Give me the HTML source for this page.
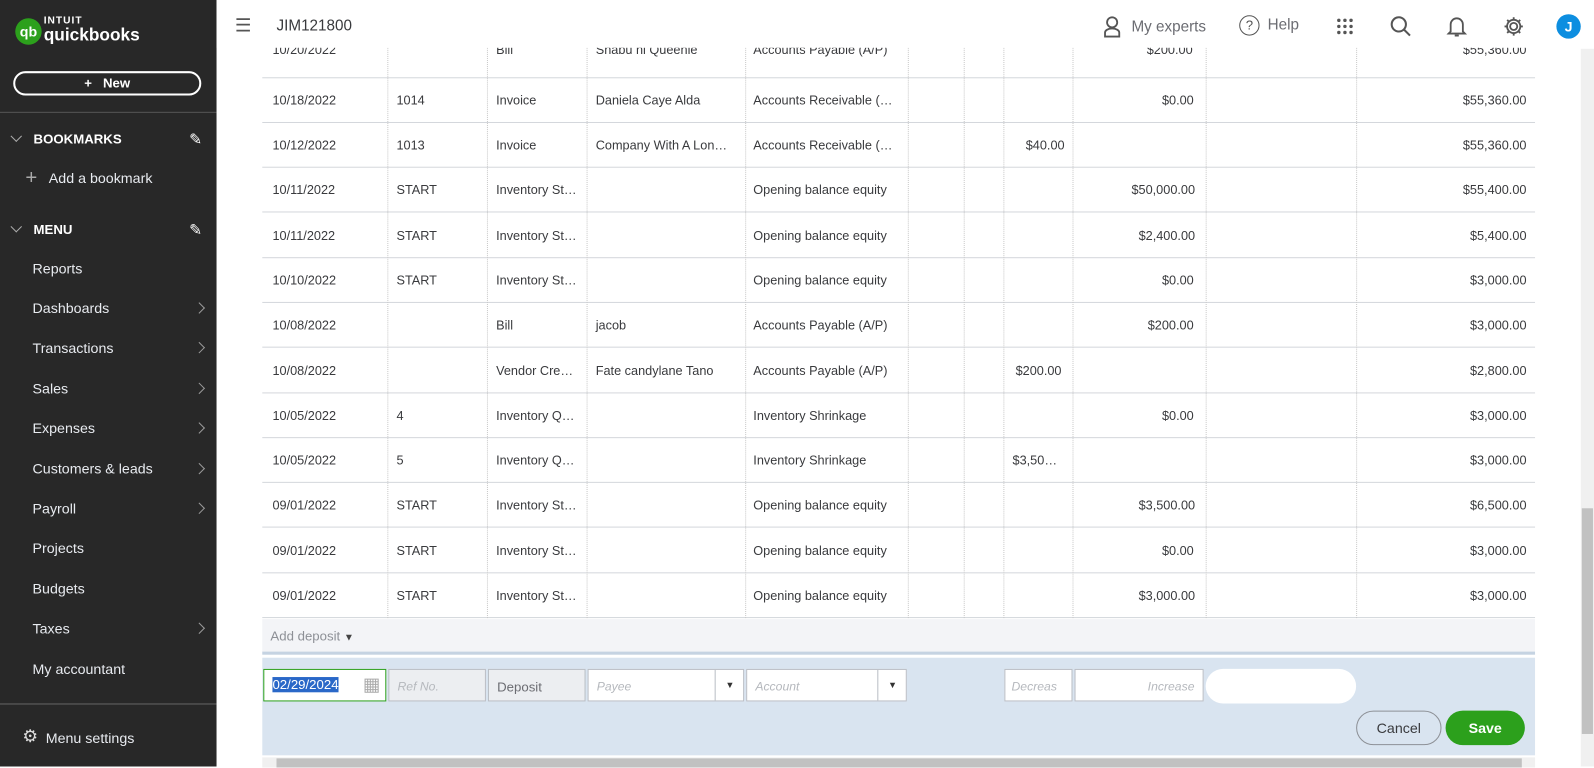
<!DOCTYPE html>
<html><head><meta charset="utf-8"><style>
*{box-sizing:border-box;margin:0;padding:0}
html,body{width:1594px;height:766px;overflow:hidden;background:#fff}
#w{position:absolute;left:0;top:0;width:1568px;height:754px;transform:scale(1.01658);transform-origin:0 0;font-family:"Liberation Sans",sans-serif;color:#393a3d}
.sb{position:absolute;left:0;top:0;width:213px;height:754px;background:#282828;color:#fff}
.sb .it{position:absolute;left:32px;font-size:14px;color:#e8ebf0}
.chev{position:absolute;left:192px;width:8px;height:8px;border-right:1.6px solid #9a9a9a;border-top:1.6px solid #9a9a9a;transform:rotate(45deg)}
.row{position:absolute;left:258px;width:1252px;height:44px;border-bottom:1px solid #d4d7dc;font-size:12.5px}
.row span{position:absolute;top:15px;white-space:nowrap}
.vl{position:absolute;top:33px;height:575px;border-left:1px dotted #c8c8c8}
.inp{position:absolute;top:658px;height:32px;background:#fff;border:1px solid #babec5;font-size:12px;font-style:italic;color:#b5b8bd;padding:9px 8px}
</style></head><body><div id="w">
<div class="sb">
 <svg style="position:absolute;left:13px;top:16px" width="30" height="30"><circle cx="15" cy="15" r="13" fill="#2ca01c"/><text x="15" y="20" font-size="14" font-weight="bold" fill="#fff" text-anchor="middle" font-family="Liberation Sans">qb</text></svg>
 <div style="position:absolute;left:43px;top:15px;font-size:10px;font-weight:bold;letter-spacing:1px">INTUIT</div>
 <div style="position:absolute;left:43px;top:25px;font-size:17px;font-weight:bold">quickbooks</div>
 <div style="position:absolute;left:13px;top:70px;width:185px;height:24px;border:2px solid #fff;border-radius:12px;text-align:center;font-size:13px;font-weight:bold;line-height:20px">+&nbsp;&nbsp; New</div>
 <div style="position:absolute;left:0;top:110px;width:213px;border-top:1px solid #555"></div>
 <div style="position:absolute;left:12px;top:130px;width:8px;height:8px;border-right:1.6px solid #aaa;border-bottom:1.6px solid #aaa;transform:rotate(45deg)"></div>
 <div style="position:absolute;left:33px;top:129px;font-size:13px;font-weight:bold">BOOKMARKS</div>
 <div style="position:absolute;left:186px;top:128px;font-size:15px">✎</div>
 <div style="position:absolute;left:25px;top:164px;font-size:20px;color:#aaa">+</div>
 <div class="it" style="left:48px;top:167px">Add a bookmark</div>
 <div style="position:absolute;left:12px;top:219px;width:8px;height:8px;border-right:1.6px solid #aaa;border-bottom:1.6px solid #aaa;transform:rotate(45deg)"></div>
 <div style="position:absolute;left:33px;top:218px;font-size:13px;font-weight:bold">MENU</div>
 <div style="position:absolute;left:186px;top:217px;font-size:15px">✎</div>
 <div class="it" style="top:256px">Reports</div>
 <div class="it" style="top:295px">Dashboards</div><div class="chev" style="top:299px"></div>
 <div class="it" style="top:334px">Transactions</div><div class="chev" style="top:338px"></div>
 <div class="it" style="top:374px">Sales</div><div class="chev" style="top:378px"></div>
 <div class="it" style="top:413px">Expenses</div><div class="chev" style="top:417px"></div>
 <div class="it" style="top:453px">Customers &amp; leads</div><div class="chev" style="top:457px"></div>
 <div class="it" style="top:492px">Payroll</div><div class="chev" style="top:496px"></div>
 <div class="it" style="top:531px">Projects</div>
 <div class="it" style="top:571px">Budgets</div>
 <div class="it" style="top:610px">Taxes</div><div class="chev" style="top:614px"></div>
 <div class="it" style="top:650px">My accountant</div>
 <div style="position:absolute;left:0;top:692px;width:213px;border-top:1px solid #666"></div>
 <div style="position:absolute;left:22px;top:715px;font-size:17px;color:#ddd">⚙</div>
 <div class="it" style="left:45px;top:718px">Menu settings</div>
</div>

<div class="row" style="top:33px"><span style="left:10px;top:9px">10/20/2022</span><span style="left:230px;top:9px">Bill</span><span style="left:328px;top:9px">Shabu ni Queenie</span><span style="left:483px;top:9px">Accounts Payable (A/P)</span><span style="left:870px;top:9px">$200.00</span><span style="left:1181px;top:9px">$55,360.00</span></div>
<div class="row" style="top:77px"><span style="left:10px">10/18/2022</span><span style="left:132px">1014</span><span style="left:230px">Invoice</span><span style="left:328px">Daniela Caye Alda</span><span style="left:483px">Accounts Receivable (…</span><span style="left:885px">$0.00</span><span style="left:1181px">$55,360.00</span></div>
<div class="row" style="top:121px"><span style="left:10px">10/12/2022</span><span style="left:132px">1013</span><span style="left:230px">Invoice</span><span style="left:328px">Company With A Lon…</span><span style="left:483px">Accounts Receivable (…</span><span style="left:751px">$40.00</span><span style="left:1181px">$55,360.00</span></div>
<div class="row" style="top:165px"><span style="left:10px">10/11/2022</span><span style="left:132px">START</span><span style="left:230px">Inventory St…</span><span style="left:483px">Opening balance equity</span><span style="left:855px">$50,000.00</span><span style="left:1181px">$55,400.00</span></div>
<div class="row" style="top:210px"><span style="left:10px">10/11/2022</span><span style="left:132px">START</span><span style="left:230px">Inventory St…</span><span style="left:483px">Opening balance equity</span><span style="left:862px">$2,400.00</span><span style="left:1188px">$5,400.00</span></div>
<div class="row" style="top:254px"><span style="left:10px">10/10/2022</span><span style="left:132px">START</span><span style="left:230px">Inventory St…</span><span style="left:483px">Opening balance equity</span><span style="left:885px">$0.00</span><span style="left:1188px">$3,000.00</span></div>
<div class="row" style="top:298px"><span style="left:10px">10/08/2022</span><span style="left:230px">Bill</span><span style="left:328px">jacob</span><span style="left:483px">Accounts Payable (A/P)</span><span style="left:871px">$200.00</span><span style="left:1188px">$3,000.00</span></div>
<div class="row" style="top:343px"><span style="left:10px">10/08/2022</span><span style="left:230px">Vendor Cre…</span><span style="left:328px">Fate candylane Tano</span><span style="left:483px">Accounts Payable (A/P)</span><span style="left:741px">$200.00</span><span style="left:1188px">$2,800.00</span></div>
<div class="row" style="top:387px"><span style="left:10px">10/05/2022</span><span style="left:132px">4</span><span style="left:230px">Inventory Q…</span><span style="left:483px">Inventory Shrinkage</span><span style="left:885px">$0.00</span><span style="left:1188px">$3,000.00</span></div>
<div class="row" style="top:431px"><span style="left:10px">10/05/2022</span><span style="left:132px">5</span><span style="left:230px">Inventory Q…</span><span style="left:483px">Inventory Shrinkage</span><span style="left:738px">$3,50…</span><span style="left:1188px">$3,000.00</span></div>
<div class="row" style="top:475px"><span style="left:10px">09/01/2022</span><span style="left:132px">START</span><span style="left:230px">Inventory St…</span><span style="left:483px">Opening balance equity</span><span style="left:862px">$3,500.00</span><span style="left:1188px">$6,500.00</span></div>
<div class="row" style="top:520px"><span style="left:10px">09/01/2022</span><span style="left:132px">START</span><span style="left:230px">Inventory St…</span><span style="left:483px">Opening balance equity</span><span style="left:885px">$0.00</span><span style="left:1188px">$3,000.00</span></div>
<div class="row" style="top:564px"><span style="left:10px">09/01/2022</span><span style="left:132px">START</span><span style="left:230px">Inventory St…</span><span style="left:483px">Opening balance equity</span><span style="left:862px">$3,000.00</span><span style="left:1188px">$3,000.00</span></div>
<div class="vl" style="left:381px"></div><div class="vl" style="left:479px"></div><div class="vl" style="left:577px"></div><div class="vl" style="left:733px"></div><div class="vl" style="left:893px"></div><div class="vl" style="left:948px"></div><div class="vl" style="left:987px"></div><div class="vl" style="left:1055px"></div><div class="vl" style="left:1186px"></div><div class="vl" style="left:1334px"></div>

<div style="position:absolute;left:213px;top:0;width:1355px;height:47px;background:#fff"></div>
<div style="position:absolute;left:231px;top:15px;font-size:18px;color:#555">☰</div>
<div style="position:absolute;left:272px;top:17px;font-size:15px;color:#393a3d">JIM121800</div>
<svg style="position:absolute;left:1085px;top:15px" width="18" height="22" fill="none" stroke="#555" stroke-width="1.8"><circle cx="9" cy="7" r="5"/><path d="M2 21v-4a7 4 0 0114 0v4z"/></svg>
<div style="position:absolute;left:1113px;top:18px;font-size:15px;color:#6b6c72">My experts</div>
<div style="position:absolute;left:1219px;top:15px;width:20px;height:20px;border:1.8px solid #555;border-radius:50%;font-size:13px;text-align:center;line-height:17px;color:#555">?</div>
<div style="position:absolute;left:1247px;top:16px;font-size:15px;color:#6b6c72">Help</div>
<svg style="position:absolute;left:1315px;top:18px" width="16" height="16" fill="#555"><circle cx="2" cy="2" r="1.7"/><circle cx="8" cy="2" r="1.7"/><circle cx="14" cy="2" r="1.7"/><circle cx="2" cy="8" r="1.7"/><circle cx="8" cy="8" r="1.7"/><circle cx="14" cy="8" r="1.7"/><circle cx="2" cy="14" r="1.7"/><circle cx="8" cy="14" r="1.7"/><circle cx="14" cy="14" r="1.7"/></svg>
<svg style="position:absolute;left:1367px;top:15px" width="22" height="22" fill="none" stroke="#555" stroke-width="2"><circle cx="9" cy="9" r="7"/><path d="M14 14l6 6"/></svg>
<svg style="position:absolute;left:1423px;top:14px" width="20" height="24" fill="none" stroke="#555" stroke-width="1.8"><path d="M4 17V10a6 6 0 0112 0v7l2 2H2z M8 21h4"/></svg>
<svg style="position:absolute;left:1478px;top:15px" width="22" height="22" fill="none" stroke="#555" stroke-width="1.8"><circle cx="11" cy="11" r="3.5"/><path d="M11 2v3M11 17v3M2 11h3M17 11h3M4.6 4.6l2.1 2.1M15.3 15.3l2.1 2.1M4.6 17.4l2.1-2.1M15.3 6.7l2.1-2.1"/><circle cx="11" cy="11" r="6.5"/></svg>
<div style="position:absolute;left:1531px;top:14px;width:24px;height:24px;border-radius:50%;background:#0d8ee0;color:#fff;font-weight:bold;font-size:14px;text-align:center;line-height:24px">J</div>

<div style="position:absolute;left:258px;top:609px;width:1252px;height:35px;background:#f3f4f7;border-bottom:3px solid #c5d3e2;font-size:13px;color:#8d9096;padding:9px 8px">Add deposit <span style="font-size:10px;color:#444">▼</span></div>
<div style="position:absolute;left:258px;top:647px;width:1252px;height:96px;background:#d9e4f0"></div>
<div class="inp" style="left:259px;width:121px;border:1.5px solid #2ca01c;font-style:normal;color:#fff;padding:7px 8px"><span style="background:#2a68c8;font-size:13px">02/29/2024</span><span style="position:absolute;right:5px;top:4px;font-size:18px;color:#aaa">▦</span></div>
<div class="inp" style="left:382px;width:96px;background:#eceef1">Ref No.</div>
<div class="inp" style="left:480px;width:96px;background:#eceef1;font-style:normal;color:#6b6c72;font-size:13px">Deposit</div>
<div class="inp" style="left:578px;width:154px">Payee<span style="position:absolute;left:124px;top:0;width:29px;height:30px;border-left:1px solid #babec5;font-style:normal;color:#333;font-size:9px;text-align:center;line-height:30px">▼</span></div>
<div class="inp" style="left:734px;width:158px">Account<span style="position:absolute;left:128px;top:0;width:29px;height:30px;border-left:1px solid #babec5;font-style:normal;color:#333;font-size:9px;text-align:center;line-height:30px">▼</span></div>
<div class="inp" style="left:988px;width:67px;padding:9px 6px">Decreas</div>
<div class="inp" style="left:1057px;width:127px;text-align:right">Increase</div>
<div style="position:absolute;left:1186px;top:658px;width:148px;height:34px;background:#fff;border-radius:17px"></div>
<div style="position:absolute;left:1334px;top:699px;width:84px;height:34px;border:1px solid #8d9096;border-radius:17px;text-align:center;line-height:32px;font-size:14px;color:#393a3d">Cancel</div>
<div style="position:absolute;left:1422px;top:699px;width:78px;height:34px;background:#2ca01c;border-radius:17px;text-align:center;line-height:34px;font-size:14px;font-weight:bold;color:#fff">Save</div>

<div style="position:absolute;left:258px;top:745px;width:1252px;height:10px;background:#f0f0f0"></div>
<div style="position:absolute;left:272px;top:746px;width:1225px;height:9px;background:#c1c1c1"></div>
<div style="position:absolute;left:1555px;top:48px;width:13px;height:706px;background:#f0f0f0"></div>
<div style="position:absolute;left:1556px;top:500px;width:11px;height:222px;background:#c1c1c1"></div>
</div></body></html>
